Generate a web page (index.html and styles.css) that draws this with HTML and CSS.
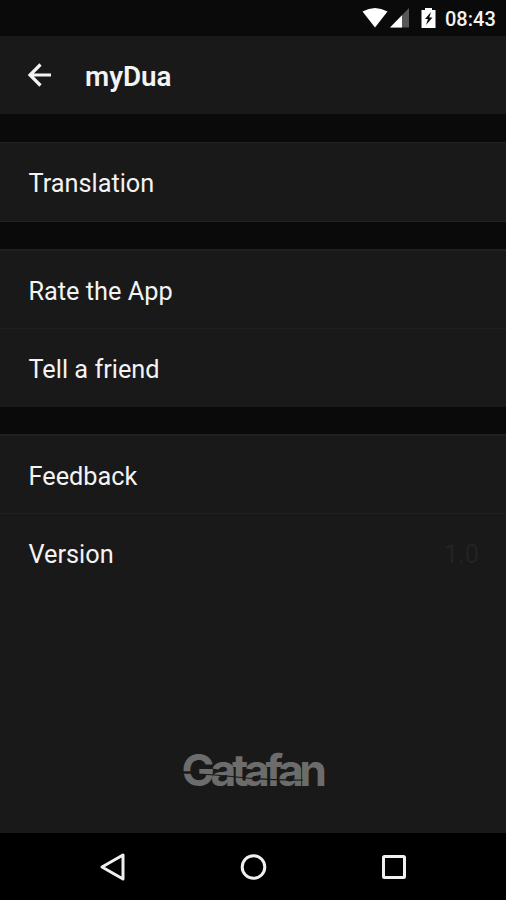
FILE: index.html
```html
<!DOCTYPE html>
<html lang="en">
<head>
<meta charset="utf-8">
<title>myDua</title>
<link rel="stylesheet" href="styles.css">
</head>
<body>
<div class="screen">
  <div class="status">
    <svg class="status-icons" width="76" height="24" viewBox="0 0 76 24">
      <path class="solid" d="M0.500 5.500Q13 -1.500 25.500 5.500L13 21.500Z"/>
      <path class="signal-off" d="M47 2V21.500H28Z"/>
      <path class="solid" d="M40 9.300V21.500H28Z"/>
      <path class="solid" d="M63 2H70V4H73.500V22H59.500V4H63Z"/>
      <path class="bolt" d="M69 6L63 13H66L64 19L70.500 11.500H67.300Z"/>
    </svg>
    <span class="clock">08:43</span>
  </div>
  <header class="appbar">
    <svg class="back" width="26" height="26" viewBox="0 0 26 26"><path d="M24 13H3M13.500 2.500L3 13L13.500 23.500"/></svg>
    <h1>myDua</h1>
  </header>
  <main class="settings">
    <section class="group"><div class="row">Translation</div></section>
    <section class="group"><div class="row">Rate the App</div><div class="row">Tell a friend</div></section>
    <section class="group last"><div class="row">Feedback</div><div class="row"><span>Version</span><span class="value">1.0</span></div></section>
    <svg class="brand" width="160" height="60" viewBox="0 0 160 60">
      <text x="2.500" y="45">Gatafan</text>
      <path class="gap" d="M2 31.500H16"/>
      <path class="cut" d="M16 33C50 33 64 40 124 39"/>
    </svg>
  </main>
  <nav class="navbar">
    <svg viewBox="0 0 30 30"><path d="M4 15L25 3V27Z"/></svg>
    <svg viewBox="0 0 30 30"><circle cx="14.500" cy="15" r="11.300"/></svg>
    <svg viewBox="0 0 30 30"><rect x="4.500" y="4.500" width="21" height="21" rx="1"/></svg>
  </nav>
</div>
</body>
</html>
```
FILE: styles.css
```css
* { box-sizing: border-box; }
body { margin: 0; background: #0a0a0a; color: #f3f3f3; font-family: Roboto, sans-serif; }
.screen { width: 506px; height: 900px; display: flex; flex-direction: column; overflow: hidden; }
.status { height: 36px; display: flex; align-items: center; justify-content: flex-end; gap: 7px; padding: 0 11px 0 0; }
.solid { fill: #fff; }
.signal-off { fill: #575757; }
.bolt { fill: #0a0a0a; }
.clock { font-size: 20px; font-weight: 500; line-height: 24px; width: 50px; white-space: nowrap; padding-top: 1px; }
.appbar { height: 78px; background: #191919; display: flex; align-items: center; padding-left: 27px; gap: 32px; }
.back { fill: none; stroke: #f3f3f3; stroke-width: 3.2; }
h1 { margin: 3px 0 0; font-size: 27.8px; line-height: 32px; font-weight: 600; }
.settings { flex: 1; display: flex; flex-direction: column; position: relative; }
.group { margin-top: 27px; background: #191919; border-top: 2px solid #202020; }
.group:first-child { margin-top: 28px; border-top-width: 1px; border-bottom: 1px solid #222; }
.row { height: 78px; padding: 3px 27px 0 28.500px; display: flex; align-items: center; justify-content: space-between; font-size: 25.3px; }
.row + .row { height: 77px; border-top: 1px solid #202020; padding-top: 4px; }
.group:nth-child(2) { padding-bottom: 1px; }
.group:not(:first-child) .row:first-child { height: 77px; }
.group:nth-child(2) .row + .row { height: 78px; padding-top: 3px; }
.value { color: #232323; }
.last { flex: 1; }
.brand { position: absolute; left: 179px; top: 627px; }
.brand text { font: 650 44.5px Inter, sans-serif; letter-spacing: -4.4px; fill: #6c6c6c; }
.cut, .gap { fill: none; stroke: #191919; stroke-width: 1.2; }
.gap { stroke-width: 2.5; }
.navbar { height: 67px; background: #000; display: flex; justify-content: space-between; align-items: center; padding: 0 97px 0 98px; }
.navbar svg { width: 30px; height: 30px; fill: none; stroke: #f0f0f0; stroke-width: 3; stroke-linejoin: round; }
```
